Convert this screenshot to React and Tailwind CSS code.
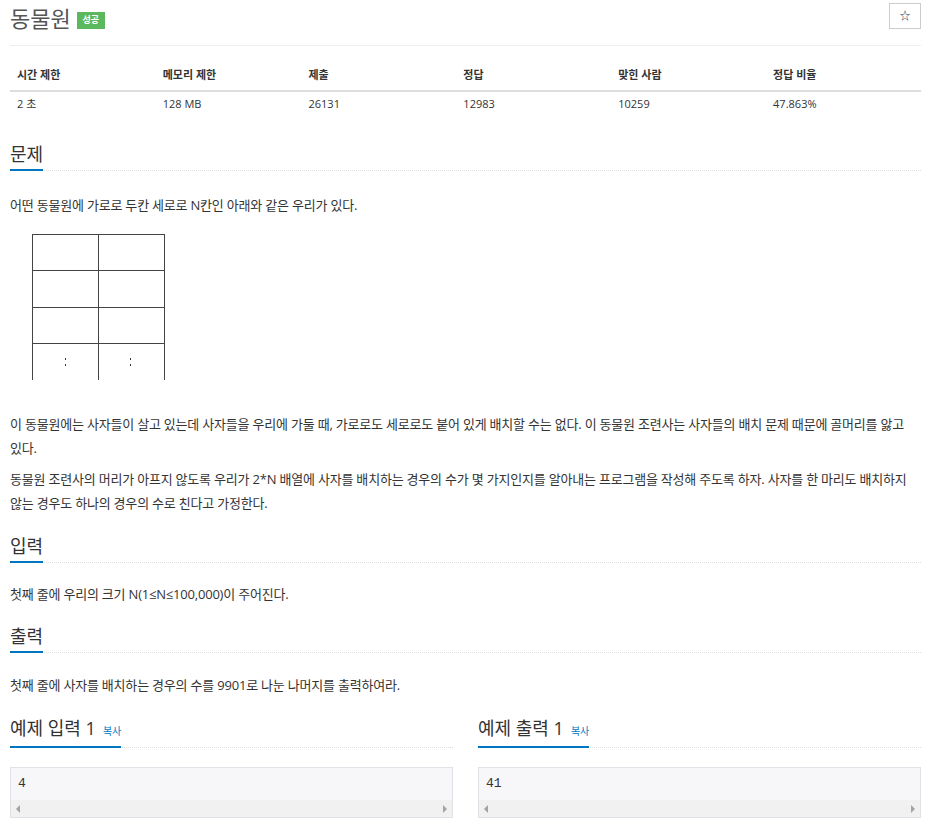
import React from 'react';

const cols = [
  { label: '시간 제한', value: '2 초', w: 'w-[16%]' },
  { label: '메모리 제한', value: '128 MB', w: 'w-[16%]' },
  { label: '제출', value: '26131', w: 'w-[17%]' },
  { label: '정답', value: '12983', w: 'w-[17%]' },
  { label: '맞힌 사람', value: '10259', w: 'w-[17%]' },
  { label: '정답 비율', value: '47.863%', w: 'w-[17%]' },
];

function SectionTitle({ children, className = '' }) {
  return (
    <div className={`border-b border-dotted border-[#ddd] ${className}`}>
      <div className="-mb-px inline-flex items-baseline border-b-2 border-[#0076c0] pb-[2px] text-[18px] leading-[26px] text-[#333]">
        {children}
      </div>
    </div>
  );
}

function Cage() {
  return (
    <svg width="134" height="146" viewBox="0 0 134 146" className="ml-[22px] mt-[17px] block">
      <g stroke="#444" strokeWidth="1" shapeRendering="crispEdges">
        <line x1="0.5" y1="0" x2="0.5" y2="146" />
        <line x1="66.5" y1="0" x2="66.5" y2="146" />
        <line x1="132.5" y1="0" x2="132.5" y2="146" />
        <line x1="0" y1="0.5" x2="133" y2="0.5" />
        <line x1="0" y1="36.5" x2="133" y2="36.5" />
        <line x1="0" y1="73.5" x2="133" y2="73.5" />
        <line x1="0" y1="109.5" x2="133" y2="109.5" />
      </g>
      <g fill="#333">
        <rect x="33" y="124" width="1" height="2" />
        <rect x="33" y="130" width="1" height="2" />
        <rect x="98" y="124" width="1" height="2" />
        <rect x="98" y="130" width="1" height="2" />
      </g>
    </svg>
  );
}

function SampleBox({ title, value }) {
  return (
    <div>
      <SectionTitle>
        <span>{title}</span>
        <span className="ml-[7px] text-[10px] text-[#0076c0]">복사</span>
      </SectionTitle>
      <div className="mt-[19px] border border-[#e1e1e8] bg-[#f7f7f9]">
        <pre className="px-[7px] pt-[6px] pb-[6px] font-['Liberation_Mono',monospace] text-[13px] leading-[20px] text-[#333]">{value}</pre>
        <div className="flex h-[17px] items-center justify-between bg-[#f1f1f1] px-[5px]">
          <span className="h-0 w-0 border-y-[4px] border-r-[4px] border-y-transparent border-r-[#a3a3a3]" />
          <span className="h-0 w-0 border-y-[4px] border-l-[4px] border-y-transparent border-l-[#a3a3a3]" />
        </div>
      </div>
    </div>
  );
}

export default function App() {
  return (
    <div className="min-h-[826px] bg-white px-[10px] font-['Open_Sans','Noto_Sans_CJK_KR',sans-serif] text-[#333]">
      {/* title */}
      <div className="flex items-start justify-between pt-[3px]">
        <div className="flex items-center">
          <h1 className="text-[22px] leading-[30px] text-[#555]">동물원</h1>
          <span className="ml-[6px] mt-[4px] flex h-[17px] w-[28px] items-center justify-center bg-[#5cb85c] text-[9px] font-bold text-white">
            성공
          </span>
        </div>
        <button className="flex h-[26px] w-[32px] items-center justify-center border border-[#ccc] bg-white text-[11px] text-[#333]">
          ☆
        </button>
      </div>
      <div className="mt-[12px] border-t border-[#eee]" />

      {/* info table */}
      <table className="mt-[14px] w-full border-collapse text-[11px]">
        <thead>
          <tr className="border-b-2 border-[#ddd]">
            {cols.map((c) => (
              <th key={c.label} className={`${c.w} px-[7px] pt-[7px] pb-[7px] text-left font-bold leading-[16px]`}>
                {c.label}
              </th>
            ))}
          </tr>
        </thead>
        <tbody>
          <tr>
            {cols.map((c) => (
              <td key={c.label} className="px-[7px] pt-[4px] pb-[6px] leading-[16px]">
                {c.value}
              </td>
            ))}
          </tr>
        </tbody>
      </table>

      {/* 문제 */}
      <SectionTitle className="mt-[23px]">문제</SectionTitle>
      <div className="break-keep text-[13px] leading-[24px] tracking-[-0.2px]">
        <p className="mt-[22px]">어떤 동물원에 가로로 두칸 세로로 N칸인 아래와 같은 우리가 있다.</p>
        <Cage />
        <p className="mt-[32px]">
          이 동물원에는 사자들이 살고 있는데 사자들을 우리에 가둘 때, 가로로도 세로로도 붙어 있게 배치할 수는 없다. 이 동물원 조련사는 사자들의 배치 문제 때문에 골머리를 앓고 있다.
        </p>
        <p className="mt-[7px]">
          동물원 조련사의 머리가 아프지 않도록 우리가 2*N 배열에 사자를 배치하는 경우의 수가 몇 가지인지를 알아내는 프로그램을 작성해 주도록 하자. 사자를 한 마리도 배치하지 않는 경우도 하나의 경우의 수로 친다고 가정한다.
        </p>
      </div>

      {/* 입력 */}
      <SectionTitle className="mt-[18px]">입력</SectionTitle>
      <p className="mt-[19px] break-keep text-[13px] leading-[24px] tracking-[-0.2px]">첫째 줄에 우리의 크기 N(1≤N≤100,000)이 주어진다.</p>

      {/* 출력 */}
      <SectionTitle className="mt-[17px]">출력</SectionTitle>
      <p className="mt-[20px] break-keep text-[13px] leading-[24px] tracking-[-0.2px]">첫째 줄에 사자를 배치하는 경우의 수를 9901로 나눈 나머지를 출력하여라.</p>

      {/* 예제 */}
      <div className="mt-[18px] grid grid-cols-2 gap-[25px]">
        <SampleBox title="예제 입력 1" value="4" />
        <SampleBox title="예제 출력 1" value="41" />
      </div>
    </div>
  );
}
